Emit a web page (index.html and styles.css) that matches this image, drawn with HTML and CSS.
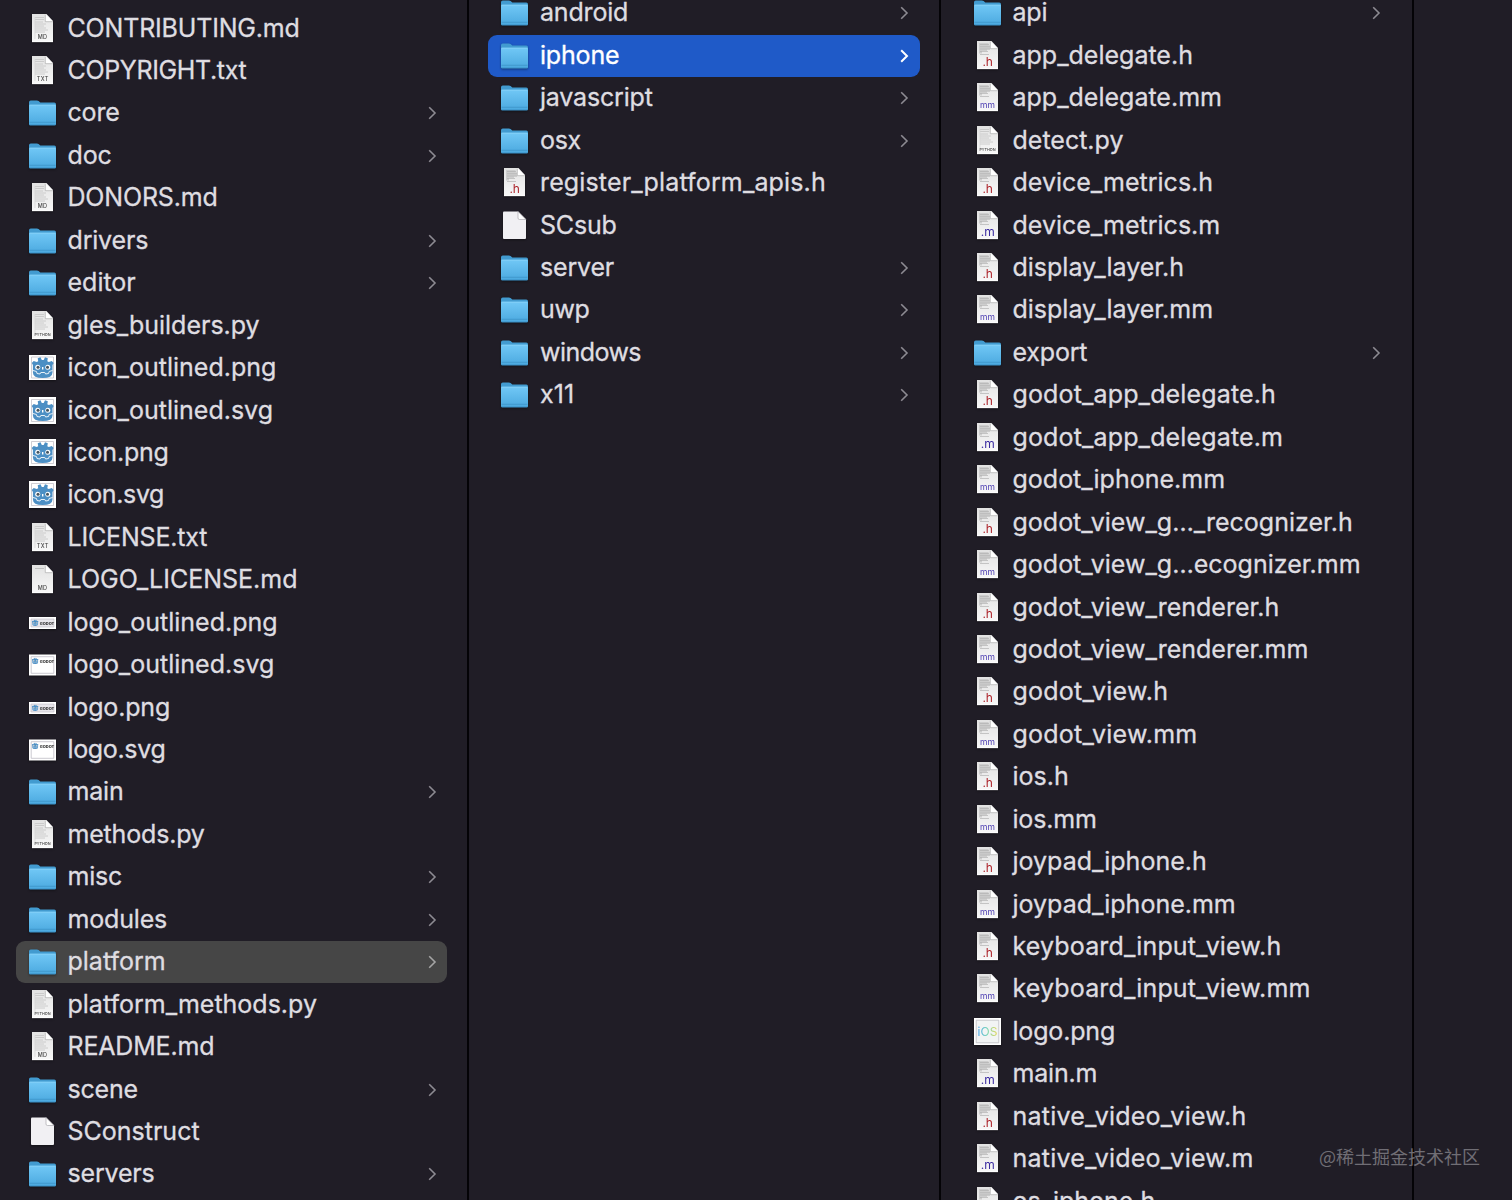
FILE: index.html
```
<!DOCTYPE html>
<html lang="en">
<head>
<meta charset="utf-8">
<title>Finder</title>
<link rel="stylesheet" href="styles.css">
</head>
<body>
<svg class="defs" aria-hidden="true">
  <defs>
    <linearGradient id="blue" x1="0" y1="0" x2="0" y2="1"><stop offset="0" stop-color="#71c8f6"/><stop offset="1" stop-color="#4ba9df"/></linearGradient>
    <linearGradient id="page" x1="0" y1="0" x2="0" y2="1"><stop offset="0" stop-color="#e2e2e2"/><stop offset="1" stop-color="#f8f8f8"/></linearGradient>
    <linearGradient id="rainbow"><stop offset="0" stop-color="#4aa6ee"/><stop offset=".5" stop-color="#7ed8b4"/><stop offset="1" stop-color="#ecd650"/></linearGradient>
    <symbol id="folder" viewBox="0 0 30 32">
      <path d="M1 5.200q0-1.700 1.700-1.700h6.200q1 0 1.700.6l1.700 1.400h14q1.700 0 1.700 1.700v19q0 1.300-1.300 1.300H2.300Q1 27.500 1 26.200z" fill="#429bd0"/>
      <path d="M1 9q0-1.300 1.300-1.300h24.400q1.300 0 1.300 1.300v18q0 1.200-1.300 1.200H2.300Q1 28.200 1 27z" fill="url(#blue)"/>
      <path d="M1.500 8.200h26" stroke="#8ad4f8" stroke-width=".8"/>
      <path d="M1.500 25.300h26" stroke="#3d94c8" stroke-width=".8"/>
      <path d="M1.500 28h26" stroke="#3487bb" stroke-width=".7"/>
    </symbol>
    <symbol id="sheet" viewBox="0 0 30 32">
      <path d="M4 1h14.500L25 8V29H4z" fill="url(#page)"/>
      <path d="M17.500 1L25 8.500h-7.500z" fill="#fff"/>
      <path d="M17.300 1.500v7.200H25" stroke="#b0b0b0" stroke-width=".7" fill="none"/>
      <path d="M4 28.700h21" stroke="#fff" stroke-width=".8"/>
    </symbol>
    <symbol id="blank" viewBox="0 0 30 32">
      <path d="M3 2.500q0-1 1-1h14L26 9.500V28q0 1-1 1H4q-1 0-1-1z" fill="#f1f0f3"/>
      <path d="M18 1.500L26 9.500h-6.500q-1.500 0-1.500-1.500z" fill="#fff" stroke="#a9a8ad" stroke-width=".7"/>
    </symbol>
    <symbol id="text" viewBox="0 0 30 32">
      <use href="#sheet"/>
      <path d="M7 4.500h9M7 6.500h9M7 9h8M7 11h11M7 13h9M7 15h11M7 17h13M7 19h10" stroke="#c4c4c4" stroke-width=".8"/>
      <path d="M7 4v22" stroke="#d2d2d2" stroke-width=".7"/>
    </symbol>
    <symbol id="md" viewBox="0 0 30 32"><use href="#text"/><text x="14.500" y="26.300" class="tag-md">MD</text></symbol>
    <symbol id="mdshort" viewBox="0 0 30 32"><use href="#sheet"/><path d="M7 4.500h9" stroke="#bbb" stroke-width=".9"/><text x="14.500" y="26.300" class="tag-md">MD</text></symbol>
    <symbol id="txt" viewBox="0 0 30 32"><use href="#text"/><text x="14.700" y="26.300" class="tag-md">TXT</text></symbol>
    <symbol id="py" viewBox="0 0 30 32"><use href="#text"/><text x="14.500" y="26" class="tag-py">PYTHON</text></symbol>
    <symbol id="code" viewBox="0 0 30 32">
      <use href="#sheet"/>
      <path d="M6 3h9.500v2.200H17V9.500h-3V11H9v2.500H6z" fill="#cecece"/>
      <path d="M7 4.500h9M7 6.700h10M7 9h10M7 11.500h8M7 14.500h9" stroke="#b2b2b2" stroke-width=".7"/>
    </symbol>
    <symbol id="h" viewBox="0 0 30 32"><use href="#code"/><text x="14.700" y="25.500" class="tag-h">.h</text></symbol>
    <symbol id="m" viewBox="0 0 30 32"><use href="#code"/><text x="14.800" y="25.500" class="tag-m">.m</text></symbol>
    <symbol id="mm" viewBox="0 0 30 32"><use href="#code"/><text x="14.500" y="25.800" class="tag-mm">mm</text></symbol>
    <symbol id="robot" viewBox="0 0 30 32">
      <path d="M3.800 11l1.900-2 3 1 1.500-.8-.5-3 2.800-.9 1.300 2.700h1.900l1.300-2.700 2.800.9-.5 3 1.500.8 3-1 1.900 2-1.200 2v7.500q0 5.500-9.800 5.500T4.900 20.500V13z" fill="#4c8fc4"/>
      <path d="M5 18.500l3.500 1 .5 2 3 .5.800-1.500h4l.8 1.500 3-.5.500-2 3.500-1" fill="none" stroke="#e9f2f9" stroke-width="1"/>
      <circle cx="9.700" cy="15.300" r="2.500" fill="#fff"/><circle cx="19.800" cy="15.300" r="2.500" fill="#fff"/>
      <circle cx="10" cy="15.300" r="1.500" fill="#455560"/><circle cx="19.500" cy="15.300" r="1.500" fill="#455560"/>
      <path d="M14.700 15v2.500" stroke="#fff" stroke-width="1.400"/>
    </symbol>
    <symbol id="godot" viewBox="0 0 30 32"><path d="M1 2h27v27H1z" fill="#fff"/><path d="M3.500 4.500h22v22h-22z" fill="#fff" stroke="#bcb9c2" stroke-width=".7"/><use href="#robot"/></symbol>
    <symbol id="godotwide" viewBox="0 0 30 32"><path d="M1 3h27v25H1z" fill="#fff"/><path d="M3.500 5h22v21h-22z" fill="#fff" stroke="#bcb9c2" stroke-width=".7"/><use href="#robot"/></symbol>
    <symbol id="logopng" viewBox="0 0 30 32"><path d="M1 10h27v12H1z" fill="#fff"/><path d="M3 12h23v8H3z" fill="#e7e5ea" stroke="#bcb9c2" stroke-width=".6"/><use href="#robot" x="2.500" y="11.200" width="9.500" height="9.500"/><text x="19" y="17.600" class="tag-logo">GODOT</text></symbol>
    <symbol id="logosvg" viewBox="0 0 30 32"><path d="M1 5.500h27v21H1z" fill="#fff"/><path d="M3.200 7.700h22.600v16.600H3.200z" fill="#fff" stroke="#b6b3bd" stroke-width=".7"/><use href="#robot" x="2.500" y="7.300" width="9.500" height="9.500"/><text x="19" y="13.500" class="tag-logo">GODOT</text></symbol>
    <symbol id="ios" viewBox="0 0 30 32"><path d="M1 2h27v27H1z" fill="#fff"/><path d="M3.200 4.200h22.600v22.600H3.200z" fill="#f2f4f4" stroke="#b5b5ba" stroke-width=".7"/><text x="14.500" y="19.500" class="tag-ios" fill="url(#rainbow)">iOS</text></symbol>
  </defs>
</svg>
<main class="browser">
  <ul class="column first">
    <li class="row"><svg class="icon"><use href="#md"/></svg><span class="name">CONTRIBUTING.md</span></li>
    <li class="row"><svg class="icon"><use href="#txt"/></svg><span class="name caps">COPYRIGHT.txt</span></li>
    <li class="row dir"><svg class="icon"><use href="#folder"/></svg><span class="name">core</span></li>
    <li class="row dir"><svg class="icon"><use href="#folder"/></svg><span class="name">doc</span></li>
    <li class="row"><svg class="icon"><use href="#md"/></svg><span class="name">DONORS.md</span></li>
    <li class="row dir"><svg class="icon"><use href="#folder"/></svg><span class="name">drivers</span></li>
    <li class="row dir"><svg class="icon"><use href="#folder"/></svg><span class="name snake">editor</span></li>
    <li class="row"><svg class="icon"><use href="#py"/></svg><span class="name snake">gles_builders.py</span></li>
    <li class="row"><svg class="icon"><use href="#godotwide"/></svg><span class="name snake">icon_outlined.png</span></li>
    <li class="row"><svg class="icon"><use href="#godot"/></svg><span class="name snake">icon_outlined.svg</span></li>
    <li class="row"><svg class="icon"><use href="#godot"/></svg><span class="name">icon.png</span></li>
    <li class="row"><svg class="icon"><use href="#godot"/></svg><span class="name caps">icon.svg</span></li>
    <li class="row"><svg class="icon"><use href="#txt"/></svg><span class="name">LICENSE.txt</span></li>
    <li class="row"><svg class="icon"><use href="#mdshort"/></svg><span class="name snake">LOGO_LICENSE.md</span></li>
    <li class="row"><svg class="icon"><use href="#logopng"/></svg><span class="name snake">logo_outlined.png</span></li>
    <li class="row"><svg class="icon"><use href="#logosvg"/></svg><span class="name snake">logo_outlined.svg</span></li>
    <li class="row"><svg class="icon"><use href="#logopng"/></svg><span class="name">logo.png</span></li>
    <li class="row"><svg class="icon"><use href="#logosvg"/></svg><span class="name caps">logo.svg</span></li>
    <li class="row dir"><svg class="icon"><use href="#folder"/></svg><span class="name">main</span></li>
    <li class="row"><svg class="icon"><use href="#py"/></svg><span class="name">methods.py</span></li>
    <li class="row dir"><svg class="icon"><use href="#folder"/></svg><span class="name">misc</span></li>
    <li class="row dir"><svg class="icon"><use href="#folder"/></svg><span class="name">modules</span></li>
    <li class="row dir open"><svg class="icon"><use href="#folder"/></svg><span class="name snake">platform</span></li>
    <li class="row"><svg class="icon"><use href="#py"/></svg><span class="name snake">platform_methods.py</span></li>
    <li class="row"><svg class="icon"><use href="#md"/></svg><span class="name">README.md</span></li>
    <li class="row dir"><svg class="icon"><use href="#folder"/></svg><span class="name">scene</span></li>
    <li class="row"><svg class="icon"><use href="#blank"/></svg><span class="name snake">SConstruct</span></li>
    <li class="row dir"><svg class="icon"><use href="#folder"/></svg><span class="name">servers</span></li>
  </ul>
  <ul class="column second">
    <li class="row dir"><svg class="icon"><use href="#folder"/></svg><span class="name">android</span></li>
    <li class="row dir selected"><svg class="icon"><use href="#folder"/></svg><span class="name">iphone</span></li>
    <li class="row dir"><svg class="icon"><use href="#folder"/></svg><span class="name">javascript</span></li>
    <li class="row dir"><svg class="icon"><use href="#folder"/></svg><span class="name caps">osx</span></li>
    <li class="row"><svg class="icon"><use href="#h"/></svg><span class="name snake-long">register_platform_apis.h</span></li>
    <li class="row"><svg class="icon"><use href="#blank"/></svg><span class="name">SCsub</span></li>
    <li class="row dir"><svg class="icon"><use href="#folder"/></svg><span class="name">server</span></li>
    <li class="row dir"><svg class="icon"><use href="#folder"/></svg><span class="name caps">uwp</span></li>
    <li class="row dir"><svg class="icon"><use href="#folder"/></svg><span class="name wide">windows</span></li>
    <li class="row dir"><svg class="icon"><use href="#folder"/></svg><span class="name snake-long">x11</span></li>
  </ul>
  <ul class="column">
    <li class="row dir"><svg class="icon"><use href="#folder"/></svg><span class="name">api</span></li>
    <li class="row"><svg class="icon"><use href="#h"/></svg><span class="name snake">app_delegate.h</span></li>
    <li class="row"><svg class="icon"><use href="#mm"/></svg><span class="name snake">app_delegate.mm</span></li>
    <li class="row"><svg class="icon"><use href="#py"/></svg><span class="name snake">detect.py</span></li>
    <li class="row"><svg class="icon"><use href="#h"/></svg><span class="name snake">device_metrics.h</span></li>
    <li class="row"><svg class="icon"><use href="#m"/></svg><span class="name snake">device_metrics.m</span></li>
    <li class="row"><svg class="icon"><use href="#h"/></svg><span class="name snake">display_layer.h</span></li>
    <li class="row"><svg class="icon"><use href="#mm"/></svg><span class="name snake">display_layer.mm</span></li>
    <li class="row dir"><svg class="icon"><use href="#folder"/></svg><span class="name">export</span></li>
    <li class="row"><svg class="icon"><use href="#h"/></svg><span class="name snake-long">godot_app_delegate.h</span></li>
    <li class="row"><svg class="icon"><use href="#m"/></svg><span class="name snake-long">godot_app_delegate.m</span></li>
    <li class="row"><svg class="icon"><use href="#mm"/></svg><span class="name snake">godot_iphone.mm</span></li>
    <li class="row"><svg class="icon"><use href="#h"/></svg><span class="name snake">godot_view_g…_recognizer.h</span></li>
    <li class="row"><svg class="icon"><use href="#mm"/></svg><span class="name snake">godot_view_g…ecognizer.mm</span></li>
    <li class="row"><svg class="icon"><use href="#h"/></svg><span class="name snake">godot_view_renderer.h</span></li>
    <li class="row"><svg class="icon"><use href="#mm"/></svg><span class="name snake">godot_view_renderer.mm</span></li>
    <li class="row"><svg class="icon"><use href="#h"/></svg><span class="name view">godot_view.h</span></li>
    <li class="row"><svg class="icon"><use href="#mm"/></svg><span class="name view">godot_view.mm</span></li>
    <li class="row"><svg class="icon"><use href="#h"/></svg><span class="name snake">ios.h</span></li>
    <li class="row"><svg class="icon"><use href="#mm"/></svg><span class="name">ios.mm</span></li>
    <li class="row"><svg class="icon"><use href="#h"/></svg><span class="name snake">joypad_iphone.h</span></li>
    <li class="row"><svg class="icon"><use href="#mm"/></svg><span class="name snake">joypad_iphone.mm</span></li>
    <li class="row"><svg class="icon"><use href="#h"/></svg><span class="name snake-long">keyboard_input_view.h</span></li>
    <li class="row"><svg class="icon"><use href="#mm"/></svg><span class="name snake-long">keyboard_input_view.mm</span></li>
    <li class="row"><svg class="icon"><use href="#ios"/></svg><span class="name">logo.png</span></li>
    <li class="row"><svg class="icon"><use href="#m"/></svg><span class="name">main.m</span></li>
    <li class="row"><svg class="icon"><use href="#h"/></svg><span class="name view">native_video_view.h</span></li>
    <li class="row"><svg class="icon"><use href="#m"/></svg><span class="name view">native_video_view.m</span></li>
    <li class="row"><svg class="icon"><use href="#h"/></svg><span class="name snake">os_iphone.h</span></li>
  </ul>
</main>
<div class="watermark">@稀土掘金技术社区</div>
<script src="chevrons.js"></script>
</body>
</html>
```
FILE: chevrons.js
```
// Every folder row ends in a disclosure chevron.
document.querySelectorAll('.row.dir').forEach(function (row) {
  row.insertAdjacentHTML('beforeend',
    '<svg class="chevron" viewBox="0 0 10 14"><path d="M2.200 1.200l5.800 5.800-5.800 5.800"/></svg>');
});
```
FILE: styles.css
```
* { box-sizing: border-box; }
body {
  margin: 0;
  height: 1200px;
  overflow: hidden;
  background: #201d26;
  color: #dfdde1;
  font-family: Inter, "Liberation Sans", sans-serif;
}
.defs { position: absolute; width: 0; height: 0; }
.browser {
  display: grid;
  grid-template-columns: 468.5px 472.5px 472.5px 1fr;
  height: 1200px;
  overflow: hidden;
}
.column {
  margin: -7.800px 0 0;
  padding: 0 19.500px;
  list-style: none;
  border-right: 2px solid #040306;
}
.column.first { padding: 15.200px 19.500px 0 15.500px; }
.row {
  display: flex;
  align-items: center;
  height: 42.440px;
  padding: 0 11px 0 12.500px;
  border-radius: 9px;
}
.first .row { padding-right: 10.500px; }
.second .row { padding-left: 12px; }
.open { background: #464646; }
.selected { background: #1f5ac8; color: #fff; }
.icon { flex: none; width: 30px; height: 32px; filter: drop-shadow(0 1px 1px #0006); }
.name {
  flex: 1;
  margin: 0 0 2px 9.500px;
  font-size: 25px;
  line-height: 40px;
  letter-spacing: -.18px;
  white-space: nowrap;
  -webkit-text-stroke: .3px currentColor;
}
.second .name { margin-left: 10px; }
.name.caps { letter-spacing: -.35px; }
.name.wide { letter-spacing: -.55px; }
.name.snake { letter-spacing: 0; }
.name.snake-long { letter-spacing: .14px; }
.name.view { letter-spacing: .22px; }
.chevron { flex: none; width: 10px; height: 14px; fill: none; stroke: #8d8b92; stroke-width: 1.600; }
.selected .chevron { stroke: #fff; stroke-width: 2; }
.open .chevron { stroke: #a5a5a5; }
text { font-family: Inter, sans-serif; text-anchor: middle; }
.tag-md { font-size: 5.500px; font-weight: 500; letter-spacing: .3px; fill: #444; }
.tag-py { font-size: 3.800px; font-weight: 500; fill: #444; }
.tag-h { font-size: 12px; fill: #ac2229; }
.tag-m { font-size: 12px; fill: #3a2ba0; }
.tag-mm { font-size: 8.500px; fill: #4a3bb0; }
.tag-logo { font-size: 4px; font-weight: 800; fill: #333; }
.tag-ios { font-size: 12px; font-weight: 400; }
.watermark {
  position: absolute;
  right: 32px;
  bottom: 30px;
  font: 18px/28px "Noto Sans CJK SC", sans-serif;
  color: #706e75;
}
```
